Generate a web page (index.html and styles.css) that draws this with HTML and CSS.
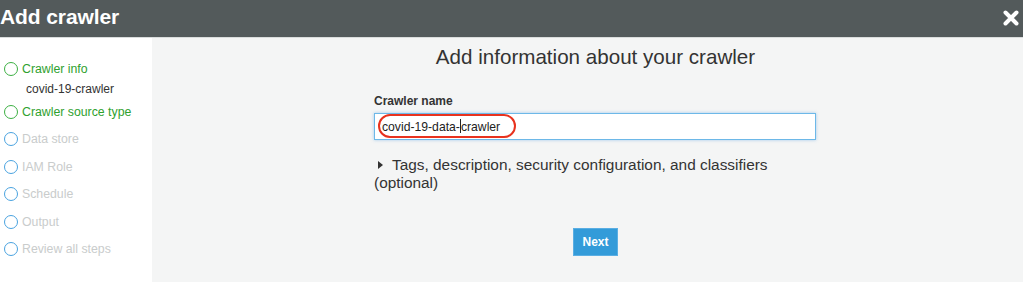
FILE: index.html
```html
<!DOCTYPE html>
<html>
<head>
<meta charset="utf-8">
<link rel="stylesheet" href="styles.css">
</head>
<body>
<div class="modal">
  <header class="header">
    <h1 class="title">Add crawler</h1>
    <svg class="close" width="16" height="16" viewBox="0 0 16 16"><path d="M2.5 2.5 L13.5 13.5 M13.5 2.5 L2.5 13.5" stroke="#fff" stroke-width="4" stroke-linecap="round"/></svg>
  </header>
  <div class="body">
    <nav class="steps">
      <div class="step done"><span class="dot"></span><span class="label">Crawler info</span></div>
      <div class="sub">covid-19-crawler</div>
      <div class="step done"><span class="dot"></span><span class="label">Crawler source type</span></div>
      <div class="step"><span class="dot"></span><span class="label">Data store</span></div>
      <div class="step"><span class="dot"></span><span class="label">IAM Role</span></div>
      <div class="step"><span class="dot"></span><span class="label">Schedule</span></div>
      <div class="step"><span class="dot"></span><span class="label">Output</span></div>
      <div class="step"><span class="dot"></span><span class="label">Review all steps</span></div>
    </nav>
    <main class="main">
      <div class="content">
        <h2 class="heading">Add information about your crawler</h2>
        <label class="field-label">Crawler name</label>
        <div class="input-wrap">
          <div class="input"><span class="value">covid-19-data-<span class="caret"></span>crawler</span></div>
          <span class="ring"></span>
        </div>
        <div class="expander"><span class="tri"></span>Tags, description, security configuration, and classifiers (optional)</div>
        <div class="actions"><button class="next">Next</button></div>
      </div>
    </main>
  </div>
</div>
</body>
</html>
```
FILE: styles.css
```css
* { box-sizing: border-box; }
html, body { margin: 0; padding: 0; }
body {
  width: 1023px;
  height: 282px;
  overflow: hidden;
  font-family: "Liberation Sans", Arial, sans-serif;
  background: #fff;
}
.modal { display: flex; flex-direction: column; height: 282px; }
.header {
  height: 38px;
  background: #535a5b;
  border-bottom: 1px solid #d9dcdc;
  display: flex;
  align-items: center;
  justify-content: space-between;
  padding: 0 4px 4px 0;
}
.title {
  margin: 0;
  color: #fff;
  font-size: 21px;
  font-weight: bold;
  letter-spacing: -0.1px;
}
.close { display: block; margin-top: 2px; }
.body { flex: 1; display: flex; }
.steps {
  width: 152px;
  background: #fff;
  padding-top: 24px;
  padding-left: 4px;
}
.step {
  display: flex;
  align-items: center;
  height: 14px;
  margin-bottom: 13.5px;
  font-size: 12.3px;
  color: #c9cccc;
}
.dot {
  width: 14px;
  height: 14px;
  border: 1.5px solid #4aa3e0;
  border-radius: 50%;
  margin-right: 4px;
  flex: none;
}
.step.done { color: #2fa12f; }
.step.done .dot { border-color: #3cb043; }
.sub {
  font-size: 12px;
  color: #333;
  padding-left: 22px;
  margin-top: -8px;
  margin-bottom: 9px;
}
.main {
  flex: 1;
  background: #f4f5f5;
  padding-left: 222px;
}
.content { width: 442px; }
.heading {
  margin: 5px 0 0;
  text-align: center;
  font-size: 20.6px;
  font-weight: normal;
  color: #333;
  height: 28px;
  line-height: 28px;
  padding-left: 1px;
}
.field-label {
  display: block;
  margin-top: 23px;
  font-size: 12px;
  font-weight: bold;
  color: #333;
  line-height: 14px;
}
.input-wrap { position: relative; margin-top: 5px; }
.input {
  height: 27px;
  background: #fff;
  border: 1px solid #6db8e8;
  box-shadow: 0 0 3px rgba(80, 160, 230, 0.5);
  padding: 0 7px;
  display: flex;
  align-items: center;
  font-size: 12.2px;
  color: #222;
}
.caret {
  display: inline-block;
  width: 1px;
  height: 14px;
  background: #222;
  vertical-align: -2px;
}
.ring {
  position: absolute;
  left: 4px;
  top: 1px;
  width: 138px;
  height: 24px;
  border: 2px solid #e8321e;
  border-radius: 12px;
}
.expander {
  margin-top: 16px;
  font-size: 15.4px;
  color: #333;
  line-height: 18px;
  text-indent: 4px;
}
.tri {
  display: inline-block;
  width: 0;
  height: 0;
  border-top: 4px solid transparent;
  border-bottom: 4px solid transparent;
  border-left: 5px solid #333;
  margin-right: 9px;
  vertical-align: 1px;
}
.actions { display: flex; justify-content: center; margin-top: 36px; padding-left: 1px; }
.next {
  width: 45px;
  height: 28px;
  border: 1px solid #5aaee3;
  background: #339bd9;
  color: #fff;
  font-family: "Liberation Sans", Arial, sans-serif;
  font-weight: bold;
  font-size: 12px;
  padding: 0;
}
```
